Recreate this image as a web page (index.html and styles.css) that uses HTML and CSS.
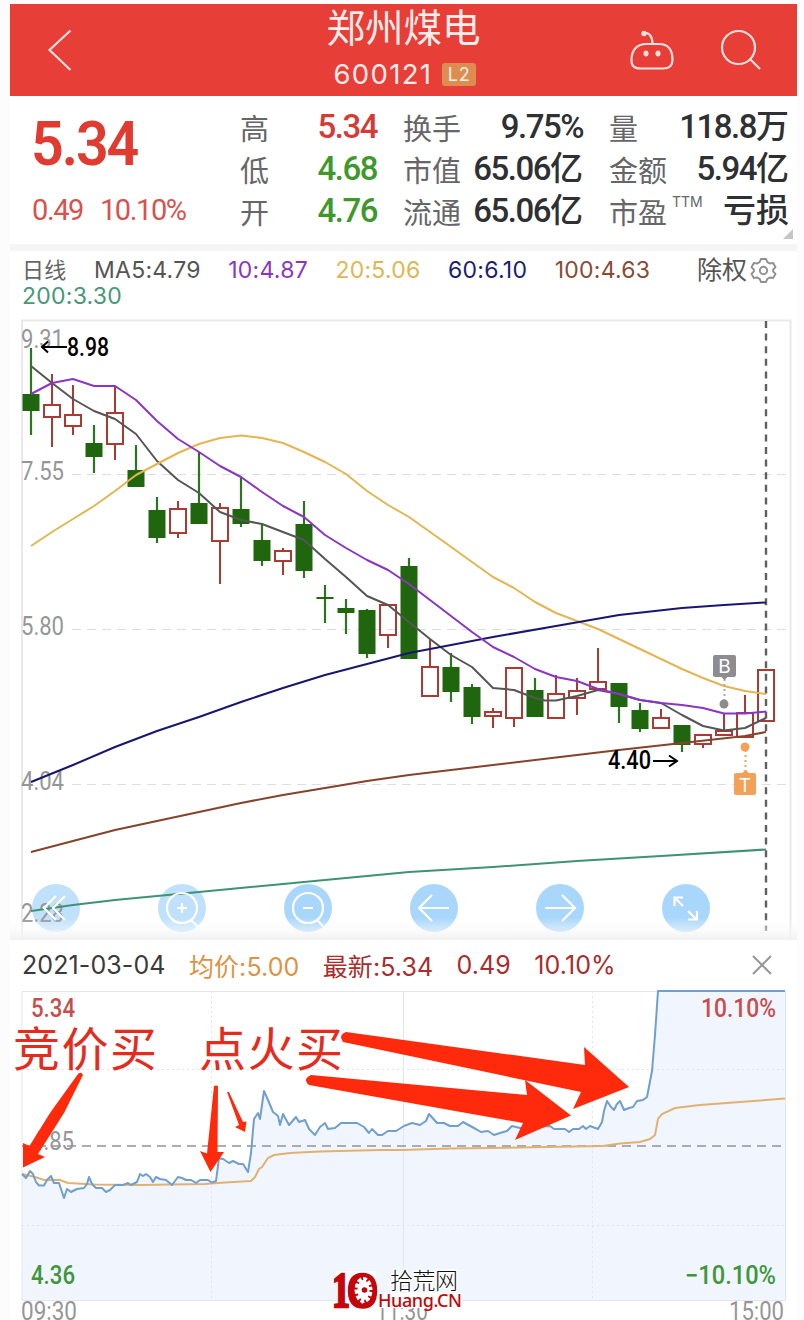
FILE: index.html
```html
<!DOCTYPE html>
<html lang="zh-CN">
<head>
  <meta charset="utf-8">
  <title>郑州煤电 600121</title>
  <link rel="stylesheet" href="styles.css">
</head>
<body>
<div class="app">

  <!-- Header -->
  <header class="topbar">
    <svg class="back" width="26" height="44" viewBox="0 0 26 44"><path d="M23.5 2.500 L2.500 22 L23.500 42"/></svg>
    <div class="title">
      <h1>郑州煤电</h1>
      <div class="code"><span>600121</span><span class="level">L2</span></div>
    </div>
    <div class="tools">
      <svg width="46" height="42" viewBox="0 0 46 42">
        <path d="M15 4 C20 3 23 7 23.500 14 M17 15 H30 C39 15 43.500 21 43.500 31 C43.500 38 39 39.500 34 39.500 H12 C6 39.500 2.500 38 2.500 31 C2.500 21 8 15 17 15 Z"/>
        <g class="dots"><circle cx="15" cy="4.500" r="2.700"/><ellipse cx="17" cy="24.500" rx="2.500" ry="3"/><ellipse cx="29" cy="24.500" rx="2.500" ry="3"/></g>
      </svg>
      <svg width="42" height="42" viewBox="0 0 42 42"><circle cx="18.500" cy="18.500" r="16.500"/><path d="M30 30 L40 40"/></svg>
    </div>
  </header>

  <!-- Quote -->
  <section class="quote">
    <div class="now">
      <div class="price">5.34</div>
      <div class="change"><span>0.49</span><span>10.10%</span></div>
    </div>
    <dl class="col c1">
      <dt>高</dt><dd class="up">5.34</dd>
      <dt>低</dt><dd class="down">4.68</dd>
      <dt>开</dt><dd class="down">4.76</dd>
    </dl>
    <dl class="col c2">
      <dt>换手</dt><dd>9.75%</dd>
      <dt>市值</dt><dd>65.06<b>亿</b></dd>
      <dt>流通</dt><dd>65.06<b>亿</b></dd>
    </dl>
    <dl class="col c3">
      <dt>量</dt><dd>118.8<b>万</b></dd>
      <dt>金额</dt><dd>5.94<b>亿</b></dd>
      <dt>市盈<sup>TTM</sup></dt><dd><b>亏损</b></dd>
    </dl>
    <i class="corner"></i>
  </section>

  <!-- Moving averages -->
  <section class="legend">
    <div class="row">
      <span class="day">日线</span>
      <span class="ma5">MA5:4.79</span>
      <span class="ma10">10:4.87</span>
      <span class="ma20">20:5.06</span>
      <span class="ma60">60:6.10</span>
      <span class="ma100">100:4.63</span>
      <span class="adjust">除权</span>
      <svg width="27" height="27" viewBox="-14 -14 28 28">
        <path d="M-2.500 -12 H2.500 L4 -8.700 L6.500 -7.300 L10 -7.800 L12.400 -3.500 L10 -1 V1 L12.400 3.500 L10 7.800 L6.500 7.300 L4 8.700 L2.500 12 H-2.500 L-4 8.700 L-6.500 7.300 L-10 7.800 L-12.400 3.500 L-10 1 V-1 L-12.400 -3.500 L-10 -7.800 L-6.500 -7.300 L-4 -8.700 Z"/><circle r="3.800"/>
      </svg>
    </div>
    <div class="ma200">200:3.30</div>
  </section>

  <!-- Daily candles -->
  <svg class="kline" width="787" height="628" viewBox="10 312 787 628">
    <defs>
      <linearGradient id="fade" x1="0" y1="0" x2="0" y2="1">
        <stop offset="0" stop-color="#fff" stop-opacity="0"/>
        <stop offset="1" stop-color="#f1f1f2"/>
      </linearGradient>
    </defs>
    <path class="frame" d="M22 940 V320.500 H790.500 V940"/>
    <path class="grid" d="M72 474.500 H788 M72 629.500 H788 M72 784.500 H788"/>
    <path class="cursor" d="M766 321 V931"/>

    <g class="axis">
      <text x="21" y="348" textLength="43" lengthAdjust="spacingAndGlyphs">9.31</text>
      <text x="21" y="480" textLength="43" lengthAdjust="spacingAndGlyphs">7.55</text>
      <text x="21" y="635" textLength="43" lengthAdjust="spacingAndGlyphs">5.80</text>
      <text x="21" y="790" textLength="43" lengthAdjust="spacingAndGlyphs">4.04</text>
    </g>

    <g id="candles"></g>

    <polyline class="line ma5" points="31,366 52,383 73,399 94,411 115,419 136,434 157,461 178,480 199,493 220,512 241,520 262,524 283,532 304,540 325,559 346,577 367,596 388,605 409,622 430,639 451,655 472,667 493,688 514,690 535,698 545,700.500 556,700.500 577,696 598,690 619,694 640,700 661,703 682,715 703,726 724,730.500 745,728 766,718"/>
    <polyline class="line ma20" points="31,546 52,532 73,519 94,506 115,491 136,475 157,464 178,453 199,444 220,438 241,435.500 262,438 283,443 304,452 325,462 346,474 367,491 388,505 409,517 440,539 472,562 493,577 514,588 535,602 556,613 577,621 598,629 619,639 640,649 661,659 682,669 703,678 724,686 745,691 766,694"/>
    <polyline class="line ma60" points="31,782 73,765 115,747 157,731 199,717 241,702 283,688 325,675 367,664 409,653 451,645 493,637 556,626 619,615 682,608 724,605 766,602.500"/>
    <polyline class="line ma100" points="31,852 73,841 115,830 157,821 199,812 241,803 283,795 325,788 367,781 409,775 451,770 493,765 556,757.500 619,750 682,743 745,736 766,732"/>
    <polyline class="line ma10" points="31,394 52,383 73,379 94,386 115,386 136,400 157,421 178,439 199,452 220,466 241,477 262,492 283,506 304,517 325,535 346,548 367,560 388,570 409,584 430,600 451,616 472,632 493,647 514,657 535,669 556,677 577,681 598,689 619,694 640,700 661,703 682,705 703,708 724,713.500 745,713.500 766,711.500"/>

    <g class="peak">
      <path d="M67 347 H42 M48 341.500 L42 347 L48 352.500"/>
      <text x="67" y="356" textLength="42" lengthAdjust="spacingAndGlyphs">8.98</text>
      <text x="608" y="769" textLength="43" lengthAdjust="spacingAndGlyphs">4.40</text>
      <path d="M653 761 H677 M669 755.500 L677 761 L669 766.500"/>
    </g>

    <g class="mark-b">
      <path class="stem" d="M724.500 679 V700"/>
      <circle cx="724" cy="704" r="4.500"/>
      <path d="M715 655 H734 Q736 655 736 657 V675 Q736 677 734 677 H727.500 L724.500 680 L721.500 677 H715 Q713 677 713 675 V657 Q713 655 715 655 Z"/>
      <text x="724.500" y="673">B</text>
    </g>
    <g class="mark-t">
      <path class="stem" d="M745.500 750 V771"/>
      <circle cx="745" cy="747" r="4.500"/>
      <path d="M736 773 H742 L745.500 770 L749 773 H754 Q756 773 756 775 V793 Q756 795 754 795 H736 Q734 795 734 793 V775 Q734 773 736 773 Z"/>
      <text x="745" y="792">T</text>
    </g>

    <g class="controls">
      <circle class="dim" cx="56" cy="908" r="24"/>
      <circle class="dim" cx="182" cy="908" r="24"/>
      <circle cx="308" cy="908" r="24"/>
      <circle cx="434" cy="908" r="24"/>
      <circle cx="560" cy="908" r="24"/>
      <circle cx="686" cy="908" r="24"/>
    </g>
    <text class="axis" x="21" y="922" textLength="43" lengthAdjust="spacingAndGlyphs">2.28</text>
    <polyline class="line ma200" points="31,911 73,905 115,900 199,892 283,884 367,876 409,872 493,867 577,861 661,856 766,849.500"/>
    <g class="glyphs">
      <path d="M56 896 L44 908 L56 920 M65 896 L53 908 L65 920"/>
      <path d="M177 908 H187 M182 903 V913 M191 920 L198 927"/>
      <circle cx="182" cy="908" r="15"/>
      <path d="M303 908 H313 M317 920 L323 926"/>
      <circle cx="308" cy="908" r="15"/>
      <path d="M449 908 H420 M432 895 L419 908 L432 921"/>
      <path d="M545 908 H574 M562 895 L575 908 L562 921"/>
      <path d="M683 906 L675 898 M674.500 906 V897.500 H683 M688 911 L696 919 M697 911 V919.500 H688"/>
    </g>
    <rect x="10" y="918" width="787" height="22" fill="url(#fade)"/>
  </svg>

  <!-- Selected day -->
  <section class="daybar">
    <span>2021-03-04</span>
    <span class="avg">均价:5.00</span>
    <span class="last">最新:5.34</span>
    <span class="last">0.49</span>
    <span class="last">10.10%</span>
    <svg width="20" height="20" viewBox="0 0 20 20"><path d="M1 1 L19 19 M19 1 L1 19"/></svg>
  </section>

  <!-- Intraday -->
  <svg class="intraday" width="787" height="332" viewBox="10 988 787 332">
    <polygon class="area" points="22,1300 22,1174 26,1178 30,1171 36,1184 44,1185 51,1176 60,1186 64,1198 68,1189 85,1187 89,1177 94,1186 106,1191 115,1185 135,1183 140,1174 150,1176 165,1179 173,1185 179,1177 195,1180 216,1182 219,1161 228,1163 240,1163 248,1173 254,1119 257,1113 260,1119 264,1091 272,1112 280,1124 283,1114 289,1125 295,1117 302,1120 315,1135 324,1124 335,1128 342,1123 357,1123 369,1133 380,1135 398,1130 420,1123 430,1114 441,1123 454,1126 464,1123 478,1131 495,1135 512,1126 550,1127 560,1129 569,1131 580,1127 599,1128 607,1101 614,1110 620,1101 627,1110 638,1101 647,1095 653,1060 658,991 785,991 785,1300"/>
    <path class="box" d="M22 991.500 H785.500 V1300.500 H22 Z M403.500 991 V1300"/>
    <path class="dots" d="M22 1069.500 H785 M22 1225.500 H785 M211.500 991 V1300 M592.500 991 V1300"/>
    <text class="axis" x="31" y="1150" textLength="43" lengthAdjust="spacingAndGlyphs">4.85</text>
    <path class="mid" d="M22 1146 H783"/>
    <polyline class="mean" points="22,1174 35,1177 44,1180 60,1180 68,1183 95,1184.500 140,1185 205,1184 225,1182.500 251,1181 255,1177 259,1169 262,1167 268,1158 274,1155 290,1153 320,1151.500 380,1150 403,1150 450,1148.500 520,1147.500 603,1146 620,1143.500 640,1142 650,1139 655,1135 658,1119 662,1114 675,1108 700,1105 740,1102 785,1098.500"/>
    <polyline class="trend" points="22,1174 26,1178 30,1171 33,1174 36,1182 39,1185.500 44,1185.500 47,1180 51,1176 54,1183 59,1183 64,1198 67,1189 71,1192 77,1189 84,1188 87,1184 89,1177 92,1184 96,1188 102,1188 106,1192 110,1190 115,1185 123,1185 128,1183 131,1185 137,1182 140,1174 143,1176 146,1174 150,1177 153,1182 156,1177 160,1179 166,1180 172,1185 178,1177 182,1178 186,1180 191,1180 196,1183 200,1180 208,1180 212,1182.500 216,1181 219,1158 223,1159 229,1163 233,1161 239,1164 243,1164 248,1172 251,1153 254,1119 258,1113 260,1119 264,1091 268,1100 273,1112 278,1116 280,1125 283,1114 289,1125 296,1117 299,1122 305,1120 309,1129 315,1135 320,1127 325,1123 328,1129 335,1128 341,1123 357,1123 364,1127 369,1133 372,1129 378,1135 382,1135 388,1131 396,1131 404,1126 412,1123 420,1125 426,1121 429,1114 437,1123 444,1123 450,1126 458,1126 463,1122 474,1128 481,1132 488,1131 494,1135 500,1133 507,1131 512,1126 520,1128 550,1126 554,1129 565,1129 569,1132 573,1129 579,1129 583,1126 586,1129 590,1126 598,1129 602,1122 604,1111 607,1101 611,1107 614,1110 617,1104 620,1101 624,1110 629,1108 633,1107 637,1101 643,1100 647,1097 652,1071 655,1035 658,991 785,991"/>
    <text class="edge up" x="31" y="1017" textLength="44" lengthAdjust="spacingAndGlyphs">5.34</text>
    <text class="edge up" x="701" y="1017" textLength="75" lengthAdjust="spacingAndGlyphs">10.10%</text>
    <text class="edge down" x="31" y="1284" textLength="44" lengthAdjust="spacingAndGlyphs">4.36</text>
    <text class="edge down" x="685" y="1284" textLength="91" lengthAdjust="spacingAndGlyphs">−10.10%</text>
    <text class="axis" x="21" y="1319.500" textLength="56" lengthAdjust="spacingAndGlyphs">09:30</text>
    <text class="axis" x="376" y="1319.500" textLength="52" lengthAdjust="spacingAndGlyphs">11:30</text>
    <text class="axis" x="729" y="1319.500" textLength="55" lengthAdjust="spacingAndGlyphs">15:00</text>

    <!-- Hand notes -->
    <g class="notes">
      <text x="13" y="1066" textLength="144">竞价买</text>
      <text x="199" y="1066" textLength="144">点火买</text>
      <path d="M78 1074 Q81 1071 83 1075 L64 1113 L38 1154 L45 1157 L23 1167.500 L23 1143 L29.500 1146 L50 1113 Z"/>
      <path d="M214 1086 Q216 1085 218 1086 L217.500 1152 L224 1152 L210.500 1172 L200 1151 L207 1153.500 Z"/>
      <path d="M227 1092 L229 1092 L243 1122 L246.500 1121.500 L245 1132 L235 1127 L239 1125 Z"/>
      <path d="M346 1032 L585 1065 L584 1047 L629 1087 L573 1109 L581 1092 L343 1042 Q338 1035 346 1032 Z"/>
      <path d="M311 1075 L527 1095 L525 1080 L571 1115.500 L515 1140 L523 1123 L309 1085 Q302 1079 311 1075 Z"/>
    </g>

    <!-- Site mark -->
    <g class="site">
      <path class="plate" d="M336 1271 H376 V1293 H462 V1308 H340 Z"/>
      <text class="one" x="332" y="1307" textLength="18" lengthAdjust="spacingAndGlyphs">1</text>
      <text class="zero" x="347" y="1307" textLength="31" lengthAdjust="spacingAndGlyphs">0</text>
      <ellipse class="hub" cx="363.500" cy="1290" rx="9" ry="13"/>
      <ellipse class="teeth" cx="363.500" cy="1290" rx="8" ry="12"/>
      <circle cx="364.500" cy="1290" r="2.800"/>
      <text class="cn" x="390" y="1289" textLength="68">拾荒网</text>
      <text class="en" x="378" y="1307" textLength="84">Huang.CN</text>
    </g>
  </svg>
</div>

<script>
  // [center x, high, body top, body bottom, low, rising]
  const candles = [
    [31, 348, 394, 411, 435, 0], [52, 374, 404, 418, 447, 1], [73, 385, 414, 427, 435, 1],
    [94, 425, 443, 457, 473, 0], [115, 386, 412, 445, 460, 1], [136, 445, 470, 487, 487, 0],
    [157, 497, 510, 538, 543, 0], [178, 501, 508, 534, 538, 1], [199, 452, 503, 524, 524, 0],
    [220, 503, 507, 542, 584, 1], [241, 477, 509, 524, 527, 0], [262, 524, 540, 561, 566, 0],
    [283, 548, 550, 562, 575, 1], [304, 501, 524, 571, 578, 0], [325, 585, 597, 599, 623, 0],
    [346, 599, 608, 613, 634, 0], [367, 609, 610, 654, 658, 0], [388, 604, 604, 636, 648, 1],
    [409, 558, 566, 659, 659, 0], [430, 639, 666, 697, 697, 1], [451, 653, 667, 692, 702, 0],
    [472, 684, 687, 717, 724, 0], [493, 708, 711, 717, 728, 1], [514, 667, 667, 719, 727, 1],
    [535, 678, 690, 717, 717, 0], [556, 675, 693, 719, 719, 1], [577, 678, 690, 699, 715, 1],
    [598, 648, 681, 690, 690, 1], [619, 683, 683, 707, 723, 0], [640, 703, 710, 729, 732, 0],
    [661, 709, 717, 729, 729, 1], [682, 725, 725, 745, 752, 0], [703, 734, 734, 745, 748, 1],
    [724, 713, 730, 736, 736, 1], [745, 695, 712, 738, 738, 1], [766, 669, 669, 722, 722, 1]
  ];

  document.getElementById('candles').innerHTML = candles.map(([x, high, top, bottom, low, up]) => {
    const wick = `<path d="M${x} ${high}V${top}M${x} ${bottom}V${low}"/>`;
    const body = up
      ? `<rect x="${x - 8}" y="${top + 1}" width="16" height="${bottom - top - 2}"/>`
      : `<rect x="${x - 8.5}" y="${top}" width="17" height="${bottom - top}"/>`;
    return `<g class="${up ? 'rise' : 'fall'}">${wick}${body}</g>`;
  }).join('');
</script>
</body>
</html>
```
FILE: styles.css
```css
body {
  margin: 0;
  background: #fcfcfd;
  font-family: Inter, "Noto Sans CJK SC", sans-serif;
  overflow: hidden;
}
.app {
  width: 787px;
  height: 1316px;
  margin: 4px 0 0 10px;
  background: #fff;
}
svg {
  display: block;
  fill: none;
}

/* header */
.topbar {
  height: 92px;
  display: grid;
  grid-template-columns: 1fr 200px 1fr;
  align-items: center;
  background: #e73e37;
  color: #ffeceb;
}
.topbar svg {
  stroke: #ffdfdc;
  stroke-width: 2.2;
}
.topbar .dots {
  fill: #ffdfdc;
  stroke: none;
}
.back {
  margin-left: 37px;
}
.title {
  height: 92px;
  text-align: center;
}
.title h1 {
  margin: 3px 0 0;
  font-size: 38.5px;
  line-height: 42px;
  font-weight: 400;
}
.code {
  display: flex;
  align-items: center;
  gap: 10px;
  margin: 8px 0 0 30px;
  font-size: 27.5px;
  line-height: 34px;
  letter-spacing: 1.3px;
}
.level {
  width: 34px;
  height: 23px;
  font-size: 18px;
  line-height: 23px;
  letter-spacing: 1px;
  background: #dd8d50;
  border-radius: 3px;
}
.tools {
  display: flex;
  justify-content: flex-end;
  gap: 45px;
  margin-right: 35px;
}

/* quote */
.quote {
  position: relative;
  display: flex;
  height: 148px;
  box-sizing: border-box;
  padding: 10px 8px 0 22px;
}
.now {
  width: 208px;
  font-family: Roboto, sans-serif;
  color: #e03a31;
}
.price {
  margin-left: -1px;
  font-size: 61px;
  line-height: 76px;
  font-weight: 600;
  letter-spacing: -2.2px;
  transform: scaleX(0.94);
  transform-origin: left;
}
.change {
  display: flex;
  gap: 17px;
  margin-top: 12px;
  font-size: 29px;
  line-height: 32px;
  letter-spacing: -1.4px;
  color: #d9524d;
}
.col {
  display: grid;
  grid-template-columns: auto 1fr;
  grid-auto-rows: 42px;
  margin: 0;
  align-items: center;
}
.col dt {
  padding-top: 5px;
  font-size: 29px;
  line-height: 42px;
  color: #666669;
  white-space: nowrap;
}
.col dd {
  margin: 0;
  font: 500 33px/42px Roboto, "Noto Sans CJK SC", sans-serif;
  letter-spacing: -1.5px;
  text-align: right;
  color: #2f3033;
  white-space: nowrap;
}
.col dd b {
  font-weight: 500;
  letter-spacing: 0;
}
.col .up {
  color: #d63a34;
}
.col .down {
  color: #3f982c;
}
.c1 {
  width: 137px;
}
.c2 {
  width: 180px;
  margin-left: 26px;
}
.c3 {
  width: 180px;
  margin-left: 26px;
}
.col sup {
  display: inline-block;
  width: 0;
  font: 14px/14px Inter, sans-serif;
  text-indent: 5px;
  vertical-align: 17px;
}
.corner {
  position: absolute;
  right: 4px;
  bottom: 5px;
  border-left: 10px solid transparent;
  border-bottom: 10px solid #c5c5c8;
}

/* moving averages */
.legend {
  height: 68px;
  box-sizing: border-box;
  padding: 5px 20px 0 12px;
  border-top: 7px solid #f5f5f6;
  font-size: 23px;
  letter-spacing: 0.25px;
}
.legend .row {
  display: flex;
  align-items: center;
  height: 28px;
}
.legend .row span {
  margin-right: 27.5px;
  white-space: nowrap;
}
.legend svg {
  stroke: #909092;
  stroke-width: 2;
}
.legend .row .adjust {
  margin: -4px 3px 0 auto;
  font-size: 25px;
  letter-spacing: 0;
  color: #555;
}
div.ma200 {
  line-height: 25px;
}
.legend .day {
  margin-top: -4px;
  font-size: 22px;
  color: #666;
}
.ma5 { color: #555; stroke: #555; }
.ma10 { color: #8c35c4; stroke: #8c35c4; }
.ma20 { color: #e0b654; stroke: #e4b550; }
.ma60 { color: #1d1d73; stroke: #17176f; }
.ma100 { color: #8b4a34; stroke: #85432b; }
.ma200 { color: #459878; stroke: #3f9273; }

/* candles */
svg .line {
  stroke-width: 2;
  stroke-linejoin: round;
}
.frame {
  stroke: #e9e9eb;
  stroke-width: 2;
}
.grid {
  stroke: #dedee0;
  stroke-dasharray: 9 6;
}
.cursor {
  stroke: #606062;
  stroke-width: 2.4;
  stroke-dasharray: 7 5.600;
}
.axis {
  font: 25px Roboto, sans-serif;
  fill: #969698;
}
.rise {
  stroke: #ad3a32;
  stroke-width: 2;
}
.fall path {
  stroke: #2b7420;
  stroke-width: 2.2;
}
.fall rect {
  fill: #20660f;
}
.peak {
  stroke: #000;
  stroke-width: 2;
}
.peak text {
  font: 500 25px Roboto, sans-serif;
  fill: #000;
  stroke: none;
}
.mark-b {
  fill: #8d8d90;
}
.mark-t {
  fill: #f3a059;
}
.stem {
  stroke: #aaa;
  stroke-width: 2;
  stroke-dasharray: 2 3;
}
.mark-t .stem {
  stroke: #f3a059;
}
.mark-b text, .mark-t text {
  font: 19px Inter, sans-serif;
  text-anchor: middle;
  fill: #fff;
}
.controls {
  fill: #a9d7fb;
}
.controls .dim {
  fill: #bfe1fc;
}
.glyphs {
  stroke: #fff;
  stroke-width: 2.2;
}

/* selected day */
.daybar {
  display: flex;
  align-items: center;
  height: 49px;
  margin-bottom: -1px;
  padding: 0 25px 0 12px;
  font-size: 25px;
  letter-spacing: 0.1px;
  color: #3a3a3c;
}
.daybar span {
  margin-right: 23.3px;
  white-space: nowrap;
}
.daybar svg {
  margin-left: auto;
  stroke: #97979a;
  stroke-width: 2;
}
.avg {
  color: #dd9344;
}
.daybar .last {
  color: #a92d2c;
}

/* intraday */
.intraday .area {
  fill: #f1f5fe;
}
.box {
  stroke: #e3e6ee;
}
.intraday .dots {
  stroke: #e2e4ea;
  stroke-dasharray: 2 3;
}
.mid {
  stroke: #929296;
  stroke-width: 1.5;
  stroke-dasharray: 9 6;
}
.mean {
  stroke: #e2b172;
  stroke-width: 2;
}
.trend {
  stroke: #709fcf;
  stroke-width: 2;
  stroke-linejoin: round;
}
.edge {
  font: 500 25px Roboto, sans-serif;
}
.edge.up {
  fill: #c84e4d;
}
.edge.down {
  fill: #3f963b;
}
.notes path {
  fill: #fe2a0b;
}
.notes text {
  font: 400 47px "Noto Sans CJK SC", sans-serif;
  fill: #e62b1d;
}
.site {
  fill: #c4070b;
}
.site .plate {
  fill: #fff;
}
.one, .zero {
  font: bold 51px "Liberation Serif", serif;
  stroke: #c4070b;
  stroke-width: 2.5;
}
.site .hub {
  fill: #fff;
}
.site .teeth {
  fill: none;
  stroke: #c4070b;
  stroke-width: 4;
  stroke-dasharray: 2 4.400;
}
.site .cn {
  font: 300 23px "Noto Sans CJK SC", sans-serif;
  fill: #111;
  stroke: #fff;
  stroke-width: 3;
  paint-order: stroke;
}
.site .en {
  font: 500 18px "Noto Sans", sans-serif;
}
```
